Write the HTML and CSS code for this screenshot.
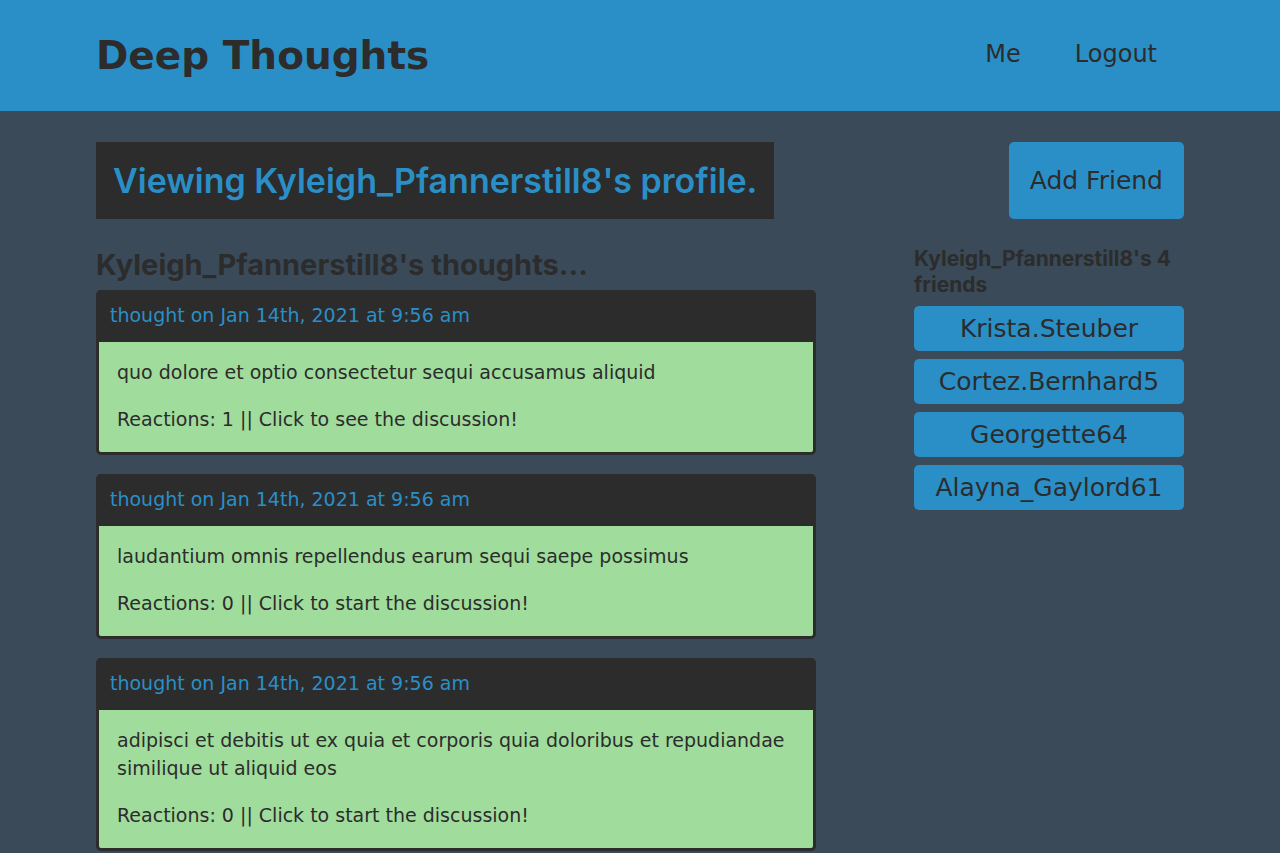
FILE: index.html
```html
<!DOCTYPE html>
<html lang="en">
<head>
<meta charset="utf-8">
<meta name="viewport" content="width=device-width, initial-scale=1">
<title>Deep Thoughts</title>
<link rel="stylesheet" href="styles.css">
</head>
<body>
<header class="site-header">
  <div class="container header-row">
    <a class="brand" href="#"><h1>Deep Thoughts</h1></a>
    <nav class="site-nav">
      <a href="#">Me</a>
      <a href="#">Logout</a>
    </nav>
  </div>
</header>
<main class="container">
  <div class="profile-bar">
    <h2 class="profile-title">Viewing Kyleigh_Pfannerstill8's profile.</h2>
    <button class="btn add-friend" type="button">Add Friend</button>
  </div>
  <div class="columns">
    <section class="thoughts">
      <h3 class="thoughts-title">Kyleigh_Pfannerstill8's thoughts...</h3>
      <div class="thought-list">
        <article class="card">
          <p class="card-header"><a href="#">thought on Jan 14th, 2021 at 9:56 am</a></p>
          <a class="card-body" href="#">
            <p>quo dolore et optio consectetur sequi accusamus aliquid</p>
            <p>Reactions: 1 || Click to see the discussion!</p>
          </a>
        </article>
        <article class="card">
          <p class="card-header"><a href="#">thought on Jan 14th, 2021 at 9:56 am</a></p>
          <a class="card-body" href="#">
            <p>laudantium omnis repellendus earum sequi saepe possimus</p>
            <p>Reactions: 0 || Click to start the discussion!</p>
          </a>
        </article>
        <article class="card">
          <p class="card-header"><a href="#">thought on Jan 14th, 2021 at 9:56 am</a></p>
          <a class="card-body" href="#">
            <p>adipisci et debitis ut ex quia et corporis quia doloribus et repudiandae similique ut aliquid eos</p>
            <p>Reactions: 0 || Click to start the discussion!</p>
          </a>
        </article>
      </div>
    </section>
    <aside class="friends">
      <h5 class="friends-title">Kyleigh_Pfannerstill8's 4 friends</h5>
      <a class="btn" href="#">Krista.Steuber</a>
      <a class="btn" href="#">Cortez.Bernhard5</a>
      <a class="btn" href="#">Georgette64</a>
      <a class="btn" href="#">Alayna_Gaylord61</a>
    </aside>
  </div>
</main>
</body>
</html>
```
FILE: styles.css
```css
:root {
  --primary: #2b8fc7;
  --dark: #2c2c2c;
  --page: #3a4a58;
  --light: #a0dc9c;
  --display: "DejaVu Sans", sans-serif;
  --heading: Inter, sans-serif;
}

* {
  box-sizing: border-box;
  margin: 0;
  padding: 0;
}

body {
  background: var(--page);
  color: var(--dark);
  font-family: var(--display);
  font-size: 19px;
  line-height: 28px;
}

a {
  color: inherit;
  text-decoration: none;
}

.container {
  width: 85%;
  margin: 0 auto;
}

.site-header {
  background: var(--primary);
  padding: 27px 0;
}

.header-row {
  display: flex;
  align-items: center;
  justify-content: space-between;
}

.brand h1 {
  font-size: 39px;
  font-weight: 700;
  line-height: 57px;
}

.site-nav {
  display: flex;
  gap: 54px;
  padding: 0 27px 3px 0;
  font-size: 24px;
}

.profile-bar {
  display: flex;
  justify-content: space-between;
  padding: 31px 0 27px;
}

.profile-title {
  background: var(--dark);
  color: var(--primary);
  font-family: var(--heading);
  font-size: 34px;
  font-weight: 600;
  line-height: 41px;
  padding: 18px 17px;
}

.btn {
  background: var(--primary);
  border: 0;
  border-radius: 5px;
  color: var(--dark);
  font-family: var(--display);
  font-size: 25px;
  line-height: 27px;
  padding: 9px;
  text-align: center;
}

.add-friend {
  padding: 0 21px;
}

.columns {
  display: grid;
  grid-template-columns: minmax(0, 8fr) minmax(0, 3fr);
  gap: 98px;
  align-items: start;
}

.thoughts-title {
  font-family: var(--heading);
  font-size: 29px;
  font-weight: 700;
  line-height: 38px;
  padding-bottom: 6px;
}

.thought-list {
  display: flex;
  flex-direction: column;
  gap: 19px;
}

.card {
  background: var(--light);
  border: 3px solid var(--dark);
  border-radius: 5px;
}

.card-header {
  background: var(--dark);
  color: var(--primary);
  padding: 8px 11px 13px;
}

.card-body {
  display: flex;
  flex-direction: column;
  gap: 19px;
  padding: 16px 18px 19px;
}

.friends {
  display: flex;
  flex-direction: column;
  gap: 8px;
}

.friends-title {
  font-family: var(--heading);
  font-size: 21px;
  font-weight: 700;
  line-height: 26px;
}
```
